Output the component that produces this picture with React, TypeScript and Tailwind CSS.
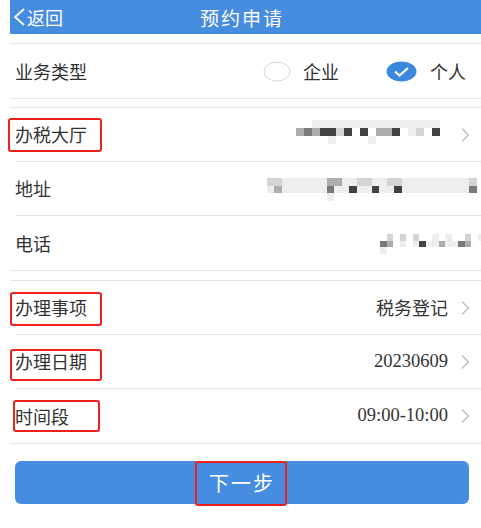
import React from "react";

const shade: Record<string, string> = {
  ".": "bg-transparent",
  a: "bg-[#eeeeee]",
  b: "bg-[#d4d4d4]",
  c: "bg-[#adadad]",
  d: "bg-[#7a7a7a]",
  e: "bg-[#424242]",
};

// Pixelated (masked) text block, one char per cell
function Mosaic({ rows, cell = 8 }: { rows: string[]; cell?: number }) {
  return (
    <div className="flex flex-col">
      {rows.map((r, i) => (
        <div key={i} className="flex">
          {r.split("").map((ch, j) => (
            <div
              key={j}
              className={shade[ch] ?? "bg-transparent"}
              style={{ width: cell, height: cell }}
            />
          ))}
        </div>
      ))}
    </div>
  );
}

function Chevron() {
  return (
    <svg width="10" height="16" viewBox="0 0 10 16" className="shrink-0">
      <polyline points="2,1.5 8.5,8 2,14.5" fill="none" stroke="#bdbdbd" strokeWidth="1.3" />
    </svg>
  );
}

function RedBox({ className }: { className: string }) {
  return (
    <div className={`pointer-events-none absolute rounded-[3px] border-2 border-[#f0201c] ${className}`} />
  );
}

function Row({
  label,
  children,
  box,
  last,
}: {
  label: string;
  children?: React.ReactNode;
  box?: string;
  last?: boolean;
}) {
  return (
    <div className={`relative flex h-[54px] items-center ml-[5px] pr-[11px] ${last ? "" : "border-b border-[#e6e6e6]"}`}>
      {box && <RedBox className={box} />}
      <span className="text-[18px] text-[#333]">{label}</span>
      <div className="ml-auto flex items-center gap-[12px]">{children}</div>
    </div>
  );
}

export default function App() {
  return (
    <div
      className="relative h-[528px] w-[481px] overflow-hidden bg-white"
      style={{ fontFamily: '"Noto Sans CJK SC", "Noto Sans", sans-serif' }}
    >
      {/* top bar */}
      <div className="relative ml-[10px] flex h-[34px] items-center bg-[#468cdf] text-white">
        <div className="flex items-center pl-[2px]">
          <svg width="14" height="20" viewBox="0 0 14 20">
            <polyline points="12,2 3,10 12,18" fill="none" stroke="#fff" strokeWidth="1.8" />
          </svg>
          <span className="ml-[1px] text-[18px] leading-none">返回</span>
        </div>
        <span className="absolute left-[190px] text-[19px] tracking-[2px] leading-none">预约申请</span>
      </div>

      <div className="h-[9px]" />

      {/* business type */}
      <div className="ml-[10px] border-y border-[#e6e6e6]">
        <div className="flex h-[54px] items-center pl-[5px] pr-[15px]">
          <span className="text-[18px] text-[#333]">业务类型</span>
          <div className="ml-auto flex items-center">
            <svg width="28" height="21" viewBox="0 0 28 21">
              <ellipse cx="14" cy="10.5" rx="13" ry="9.5" fill="#fff" stroke="#d6d6d6" strokeWidth="1" />
            </svg>
            <span className="ml-[12px] text-[18px] text-[#333]">企业</span>
            <svg width="31" height="21" viewBox="0 0 31 21" className="ml-[47px]">
              <ellipse cx="15.5" cy="10.5" rx="15" ry="10" fill="#3c88dd" />
              <polyline points="9,10.5 13.5,14.5 22,7" fill="none" stroke="#fff" strokeWidth="2.2" />
            </svg>
            <span className="ml-[13px] text-[18px] text-[#333]">个人</span>
          </div>
        </div>
      </div>

      <div className="h-[8px]" />

      {/* hall info */}
      <div className="ml-[10px] border-y border-[#e6e6e6]">
        <Row label="办税大厅" box="left-[-7px] top-[10px] h-[34px] w-[94px]">
          <div className="mt-[-6px]">
            <Mosaic
              rows={[
                "..aaaaaaaaaaaaaaaa.",
                "cdceebe.e.cce.ab.e.",
                "....a....a.........",
              ]}
            />
          </div>
          <Chevron />
        </Row>
        <Row label="地址">
          <div className="mr-[-14px] mt-[2px]">
            <Mosaic
              rows={[
                "bbaaaaaaccaabbaabbaaaaaaaaab.",
                "acaaaaaadaaeaaeaaeaaaaaaaaad.",
                "........a....................",
              ]}
              cell={7.5}
            />
          </div>
        </Row>
        <Row label="电话" last>
          <div className="mr-[-14px] mt-[2px]">
            <Mosaic
              rows={[
                "...b.b.b..a.a..b.a",
                "..dc.a.aeaacaadc..",
                "..a...............",
              ]}
              cell={6.5}
            />
          </div>
        </Row>
      </div>

      <div className="h-[9px]" />

      {/* appointment details */}
      <div className="ml-[10px] border-y border-[#e6e6e6]">
        <Row label="办理事项" box="left-[-5px] top-[11px] h-[34px] w-[92px]">
          <span className="text-[18px] text-[#333]">税务登记</span>
          <Chevron />
        </Row>
        <Row label="办理日期" box="left-[-5px] top-[14px] h-[32px] w-[92px]">
          <span className="text-[18.5px] text-[#333]" style={{ fontFamily: '"Liberation Serif", serif' }}>
            20230609
          </span>
          <Chevron />
        </Row>
        <Row label="时间段" box="left-[-2px] top-[11px] h-[32px] w-[87px]" last>
          <span className="text-[18.5px] text-[#333]" style={{ fontFamily: '"Liberation Serif", serif' }}>
            09:00-10:00
          </span>
          <Chevron />
        </Row>
      </div>

      {/* next step */}
      <div className="mt-[17px] px-[15px] pr-[12px]">
        <div className="relative flex h-[43px] items-center justify-center rounded-[6px] bg-[#468cdf]">
          <RedBox className="left-[180px] top-[0px] h-[45px] w-[92px]" />
          <span className="text-[20px] tracking-[2px] text-white">下一步</span>
        </div>
      </div>
    </div>
  );
}
